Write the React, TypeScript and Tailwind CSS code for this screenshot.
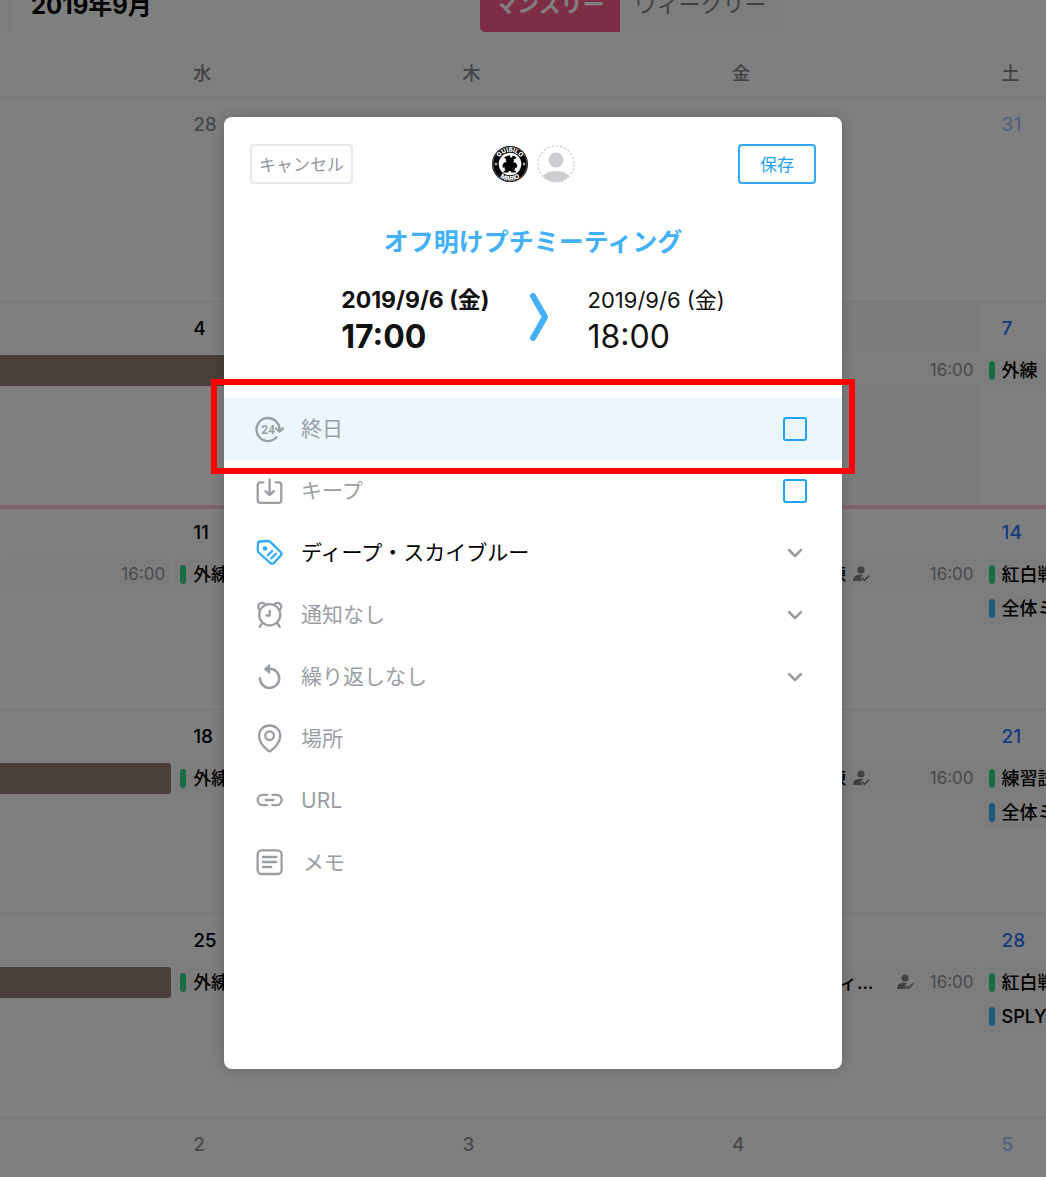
import type { ReactNode } from 'react';
import { ChevronDown } from 'lucide-react';

type CalEvent = {
  kind: 'bar' | 'green' | 'blue' | 'plain';
  title?: string;
  time?: string;
  attending?: boolean;
  flush?: boolean;
};

type Day = { date: string; tone?: 'past' | 'saturday' | 'pastSaturday'; today?: boolean; events?: CalEvent[] };

type Week = { highlight?: boolean; days: Day[] };

const weekdays = ['', '水', '木', '金', '土'];

const weeks: Week[] = [
  {
    days: [
      { date: '' },
      { date: '28', tone: 'past' },
      { date: '29', tone: 'past' },
      { date: '30', tone: 'past' },
      { date: '31', tone: 'pastSaturday' },
    ],
  },
  {
    days: [
      { date: '', events: [{ kind: 'bar', flush: true }] },
      { date: '4', events: [{ kind: 'bar', flush: true }] },
      { date: '5' },
      { date: '6', today: true, events: [{ kind: 'green', title: '外練', time: '16:00' }] },
      { date: '7', tone: 'saturday', events: [{ kind: 'green', title: '外練' }] },
    ],
  },
  {
    highlight: true,
    days: [
      { date: '', events: [{ kind: 'plain', time: '16:00' }] },
      { date: '11', events: [{ kind: 'green', title: '外練' }] },
      { date: '12' },
      { date: '13', events: [{ kind: 'green', title: 'A・Bチーム練', time: '16:00', attending: true }] },
      {
        date: '14',
        tone: 'saturday',
        events: [
          { kind: 'green', title: '紅白戦' },
          { kind: 'blue', title: '全体ミーティング' },
        ],
      },
    ],
  },
  {
    days: [
      { date: '', events: [{ kind: 'bar' }] },
      { date: '18', events: [{ kind: 'green', title: '外練' }] },
      { date: '19' },
      { date: '20', events: [{ kind: 'green', title: 'A・Bチーム練', time: '16:00', attending: true }] },
      {
        date: '21',
        tone: 'saturday',
        events: [
          { kind: 'green', title: '練習試合' },
          { kind: 'blue', title: '全体ミーティング' },
        ],
      },
    ],
  },
  {
    days: [
      { date: '', events: [{ kind: 'bar' }] },
      { date: '25', events: [{ kind: 'green', title: '外練' }] },
      { date: '26' },
      { date: '27', events: [{ kind: 'green', title: '幹部会ミーティング', time: '16:00', attending: true }] },
      {
        date: '28',
        tone: 'saturday',
        events: [
          { kind: 'green', title: '紅白戦' },
          { kind: 'blue', title: 'SPLYZA' },
        ],
      },
    ],
  },
  {
    days: [
      { date: '' },
      { date: '2', tone: 'past' },
      { date: '3', tone: 'past' },
      { date: '4', tone: 'past' },
      { date: '5', tone: 'pastSaturday' },
    ],
  },
];

const toneClass = {
  past: 'text-[#92949a]',
  saturday: 'text-[#2a74ff]',
  pastSaturday: 'text-[#a8c4ff]',
  normal: 'text-black',
};

function AttendIcon() {
  return (
    <svg viewBox="0 0 17 16" className="h-4 w-[17px] shrink-0" fill="#808289" aria-hidden="true">
      <circle cx="8" cy="4" r="3.6" />
      <path d="M0 15c0-4 2.600-6.200 7-6.200 1.300 0 2.200.2 3 .5L7.700 11.600 9.400 15z" />
      <path d="M9.300 12l2.300 2.300L16.200 9.500" fill="none" stroke="#808289" strokeWidth="1.800" />
    </svg>
  );
}

function EventItem({ event }: { event: CalEvent }) {
  if (event.kind === 'bar') {
    return (
      <li className={event.flush ? 'h-[31px] bg-[#947e74]' : 'mr-[2px] h-[31px] rounded-r-[3px] bg-[#947e74]'} />
    );
  }
  return (
    <li className="mr-[2px] ml-px flex h-[31px] items-center rounded-[3px] bg-[#fbfbfb] px-[6px]">
      {event.kind === 'green' && <span className="mr-[7px] h-[19px] w-[6px] shrink-0 rounded-full bg-[#34d88c]" />}
      {event.kind === 'blue' && <span className="mr-[7px] h-[19px] w-[6px] shrink-0 rounded-full bg-[#42b0fa]" />}
      {event.title && (
        <span className="mr-[7px] min-w-0 overflow-hidden text-lg leading-[31px] font-medium text-ellipsis whitespace-nowrap">
          {event.title}
        </span>
      )}
      {event.attending && <AttendIcon />}
      {event.time && <time className="ml-auto pl-4 text-[17px] leading-[31px] text-[#92949a]">{event.time}</time>}
    </li>
  );
}

function DayCell({ day, highlight }: { day: Day; highlight?: boolean }) {
  return (
    <td className={day.today ? 'bg-[#f8f8f8] p-0 align-top' : 'p-0 align-top'}>
      <div className={highlight ? 'h-[200px] overflow-hidden' : 'h-[203px] overflow-hidden'}>
        <div
          className={`pl-5 text-[19px] font-medium ${highlight ? 'h-[50px] leading-[47px]' : 'h-[53px] leading-[53px]'} ${toneClass[day.tone ?? 'normal']}`}
        >
          {day.date}
        </div>
        <ul className="flex flex-col gap-[3px]">
          {day.events?.map((event, k) => (
            <EventItem key={k} event={event} />
          ))}
        </ul>
      </div>
    </td>
  );
}

function Calendar() {
  return (
    <div className="h-full overflow-hidden bg-white">
      <header className="-mt-6 flex h-14 items-center">
        <button aria-label="次の月" className="h-full w-3 rounded-r-[3px] bg-[#fafafa]" />
        <h1 className="w-[468px] pt-1 pl-[19px] text-2xl font-bold">2019年9月</h1>
        <div className="flex h-full text-[22px]">
          <button className="h-full rounded-l-[5px] bg-[#fb5b8c] px-[15px] font-bold text-white">マンスリー</button>
          <button className="h-full rounded-r-[5px] bg-[#fbfbfb] px-[15px] text-[#808289]">ウィークリー</button>
        </div>
      </header>
      <table className="w-[119.600%] table-fixed border-collapse">
        <colgroup>
          <col className="w-[13.840%]" />
          <col className="w-[21.540%]" />
          <col className="w-[21.540%]" />
          <col className="w-[21.540%]" />
          <col />
        </colgroup>
        <thead>
          <tr className="h-[65px]">
            {weekdays.map((day, i) => (
              <th key={i} className="pt-5 pl-5 text-left text-lg font-medium text-[#808289]">
                {day}
              </th>
            ))}
          </tr>
        </thead>
        <tbody>
          {weeks.map((week, i) => (
            <tr key={i} className={week.highlight ? 'border-t-4 border-[#ffc8d8]' : 'border-t border-[#ececec]'}>
              {week.days.map((day, j) => (
                <DayCell key={j} day={day} highlight={week.highlight} />
              ))}
            </tr>
          ))}
        </tbody>
      </table>
    </div>
  );
}

function TeamBadge() {
  return (
    <svg viewBox="0 0 38 38" className="size-[38px]" role="img" aria-label="GUIBILO MARIO">
      <defs>
        <path id="badge-top" d="M6.800 19a12.200 12.200 0 0 1 24.400 0" />
        <path id="badge-bottom" d="M2.400 19a16.600 16.600 0 0 0 33.200 0" />
      </defs>
      <circle cx="19" cy="19" r="18" fill="#000" />
      <circle cx="19" cy="19" r="17" fill="none" stroke="#aaa" strokeWidth=".5" />
      <circle cx="19" cy="19" r="11.300" fill="#fff" />
      <g fill="#fff" fontFamily="Inter, sans-serif" fontSize="6.200" fontWeight="800" textAnchor="middle">
        <text>
          <textPath href="#badge-top" startOffset="50%">GUIBILO</textPath>
        </text>
        <text>
          <textPath href="#badge-bottom" startOffset="50%">MARIO</textPath>
        </text>
      </g>
      <path d="M3.500 19h3M5 17.500v3M31.500 19h3M33 17.500v3" stroke="#fff" strokeWidth=".8" />
      <path
        d="M15.500 11.200l2.700-1 1.200.7-.2 1.500h1.600l.6-1.500 2.600.3 1.300 1.500-1.300 1.200-1.300.1.300 2.100-.9 1.200 2.600.4 1.700 2.700-.6 2-1.400.6-.8-1 .4 1.900-.7 1.600 1.900 1.100-.2 1h-4.600l-.9-1.700h-1.400l-.9 1.700h-4.600l-.2-1 1.900-1.200-.7-1.500.4-1.900-.9.9-1.300-.7-.5-2 1.700-2.600 2.800-.6-1-1.200.2-1.700-1.400-.9-.1-1.200z"
        fill="#000"
      />
    </svg>
  );
}

function EmptyAvatar() {
  return (
    <svg viewBox="0 0 38 38" className="size-[38px]" role="img" aria-label="メンバー">
      <circle cx="19" cy="19" r="18" fill="none" stroke="#cdced1" strokeWidth="1.200" strokeDasharray="2.400 1.800" />
      <circle cx="19" cy="15" r="7.500" fill="#cdced1" />
      <path d="M5.500 31C9 27.500 14 26 19 26s10 1.500 13.500 5c-3.500 4-8.500 6-13.500 6S9 35 5.500 31z" fill="#cdced1" />
    </svg>
  );
}

function Icon({ children }: { children: ReactNode }) {
  return (
    <svg
      viewBox="0 0 30 30"
      className="size-[30px] shrink-0"
      fill="none"
      stroke="currentColor"
      strokeWidth="2.300"
      strokeLinecap="round"
      strokeLinejoin="round"
      aria-hidden="true"
    >
      {children}
    </svg>
  );
}

const icons = {
  allDay: (
    <Icon>
      <path d="M24.400 17.200A11.500 11.500 0 1 0 21.500 23.300" />
      <path d="M21 14.500l3.400 3 3.600-3" />
      <text
        x="13.200"
        y="19.600"
        textAnchor="middle"
        fontSize="12"
        fontWeight="700"
        fontFamily="Roboto, sans-serif"
        fill="currentColor"
        stroke="none"
      >
        24
      </text>
    </Icon>
  ),
  keep: (
    <Icon>
      <path d="M8.500 6.300H5.200a2.500 2.500 0 0 0-2.500 2.500v15.500a2.500 2.500 0 0 0 2.500 2.500h18.600a2.500 2.500 0 0 0 2.500-2.500V8.800a2.500 2.500 0 0 0-2.500-2.500h-3.300" />
      <path d="M14.600 3.500v15.500M10.400 15.200l4.200 4 4.200-4" />
    </Icon>
  ),
  tag: (
    <Icon>
      <path d="M4.700 3.500 13 3a3 3 0 0 1 2.300.9L25.600 14a2.600 2.600 0 0 1 .1 3.500L19.200 24.800a2.800 2.800 0 0 1-4 .1L3.700 14.500a2.600 2.600 0 0 1-.9-2L3 5a1.600 1.600 0 0 1 1.700-1.500z" />
      <circle cx="10" cy="10.500" r="2.300" fill="currentColor" stroke="none" />
      <path d="M12.800 17.200l4.300-4.200M16.300 20.300l4.500-4.500" />
    </Icon>
  ),
  alarm: (
    <Icon>
      <circle cx="14.700" cy="14.800" r="10.600" />
      <path d="M4.200 9.200A3.700 3.700 0 0 1 9.800 4M25.200 9.200A3.700 3.700 0 0 0 19.600 4M6.700 23.700l-2 3.200M22.700 23.700l2 3.200" />
      <path d="M14.700 10.800v4.700h-3.300" />
    </Icon>
  ),
  repeat: (
    <Icon>
      <path d="M5 16.300a9.600 9.600 0 1 0 9.600-9.500" strokeWidth="2.500" />
      <path d="M14.600 2.800v8.400L9.500 7z" fill="currentColor" strokeWidth="1.200" />
    </Icon>
  ),
  place: (
    <Icon>
      <path d="M14.600 1.500C8.200 1.500 4 6.100 4 11.900c0 6.300 4.900 11.200 9.200 14.800a2.200 2.200 0 0 0 2.800 0c4.300-3.600 9.200-8.500 9.200-14.800 0-5.800-4.200-10.400-10.600-10.400z" />
      <circle cx="14.600" cy="11.700" r="4.300" />
    </Icon>
  ),
  link: (
    <Icon>
      <path d="M12 8.800H7.900a5.200 5.200 0 0 0 0 10.400H12M17.300 8.800h4.100a5.200 5.200 0 0 1 0 10.400h-4.100M10.800 14h7.700" />
    </Icon>
  ),
  memo: (
    <Icon>
      <rect x="2.600" y="2.400" width="24" height="23.600" rx="4" />
      <path d="M8 9h13.300M8 14h13.300M8 19h8.300" />
    </Icon>
  ),
};

const rowClass = 'flex h-[62px] items-center gap-4 pr-[35px] pl-[31px] text-[#9a9ea3]';

function CheckRow({ icon, label }: { icon: ReactNode; label: string }) {
  return (
    <label className={rowClass}>
      {icon}
      <span className="grow">{label}</span>
      <input
        type="checkbox"
        className="size-6 appearance-none rounded-[3px] border-2 border-[#1ea4f5] bg-transparent checked:bg-[#1ea4f5]"
      />
    </label>
  );
}

function SelectRow({ icon, name, value, filled }: { icon: ReactNode; name: string; value: string; filled?: boolean }) {
  return (
    <label className={rowClass}>
      <span className={filled ? 'text-[#2fabf8]' : ''}>{icon}</span>
      <span className="relative flex grow items-center">
        <select
          aria-label={name}
          className={filled ? 'w-full appearance-none text-black' : 'w-full appearance-none'}
          defaultValue={value}
        >
          <option>{value}</option>
        </select>
        <ChevronDown
          className="pointer-events-none absolute right-0 size-6 text-[#9a9ea3]"
          strokeWidth={2.5}
          aria-hidden="true"
        />
      </span>
    </label>
  );
}

function EventDialog() {
  return (
    <form
      role="dialog"
      aria-label="予定の編集"
      className="min-h-[952px] w-[618px] max-w-full rounded-[8px] bg-white shadow-[0_0_14px_rgba(0,0,0,0.2)]"
    >
      <div className="flex items-center justify-between px-[26px] pt-[27px] text-[17px]">
        <div className="flex-1">
          <button
            type="button"
            className="h-10 rounded-[4px] border-2 border-[#e8e9eb] px-[7px] pt-[2px] leading-8 text-[#92979d]"
          >
            キャンセル
          </button>
        </div>
        <div className="flex gap-2">
          <TeamBadge />
          <EmptyAvatar />
        </div>
        <div className="flex flex-1 justify-end">
          <button
            type="button"
            className="h-10 rounded-[4px] border-2 border-[#2fabf8] px-5 pt-[2px] leading-8 text-[#1ea4f5]"
          >
            保存
          </button>
        </div>
      </div>

      <input
        aria-label="タイトル"
        defaultValue="オフ明けプチミーティング"
        className="mt-9 h-10 w-full text-center text-[25px] font-bold text-[#42b0fa]"
      />

      <div className="mt-6 flex items-center justify-center gap-[39px] text-[#111]">
        <button type="button" className="text-left font-bold">
          <span className="block text-[23px] leading-8">2019/9/6 (金)</span>
          <span className="block text-[32px] leading-[42px]">17:00</span>
        </button>
        <svg viewBox="0 0 20 50" className="mb-2 h-[50px] w-5" fill="none" aria-hidden="true">
          <path d="M4 4l12 21L4 46" stroke="#42b0fa" strokeWidth="6" strokeLinecap="round" strokeLinejoin="round" />
        </svg>
        <button type="button" className="text-left">
          <span className="block text-[22px] leading-8">2019/9/6 (金)</span>
          <span className="block text-[32px] leading-[42px]">18:00</span>
        </button>
      </div>

      <div className="mt-10 text-[21px]">
        <div className="relative bg-[#ebf6fe]">
          <CheckRow icon={icons.allDay} label="終日" />
          <div className="pointer-events-none absolute -inset-x-[13px] -top-[19px] -bottom-[14px] border-[6px] border-[#ff0000]" />
        </div>
        <CheckRow icon={icons.keep} label="キープ" />
        <SelectRow icon={icons.tag} name="カラー" value="ディープ・スカイブルー" filled />
        <SelectRow icon={icons.alarm} name="通知" value="通知なし" />
        <SelectRow icon={icons.repeat} name="繰り返し" value="繰り返しなし" />
        <label className={rowClass}>
          {icons.place}
          <input aria-label="場所" placeholder="場所" className="w-full placeholder:text-[#9a9ea3]" />
        </label>
        <label className={rowClass}>
          {icons.link}
          <input aria-label="URL" type="url" placeholder="URL" className="w-full placeholder:text-[#9a9ea3]" />
        </label>
        <label className={rowClass}>
          {icons.memo}
          <textarea
            aria-label="メモ"
            rows={1}
            placeholder="メモ"
            className="w-full resize-none pl-[2px] placeholder:text-[#9a9ea3]"
          />
        </label>
      </div>
    </form>
  );
}

export default function App() {
  return (
    <div className="relative h-screen overflow-hidden font-['Inter','Noto_Sans_CJK_JP',sans-serif]" lang="ja">
      <Calendar />
      <div className="absolute inset-0 flex items-start justify-center overflow-hidden bg-black/50 pt-[117px] pl-5">
        <EventDialog />
      </div>
    </div>
  );
}
